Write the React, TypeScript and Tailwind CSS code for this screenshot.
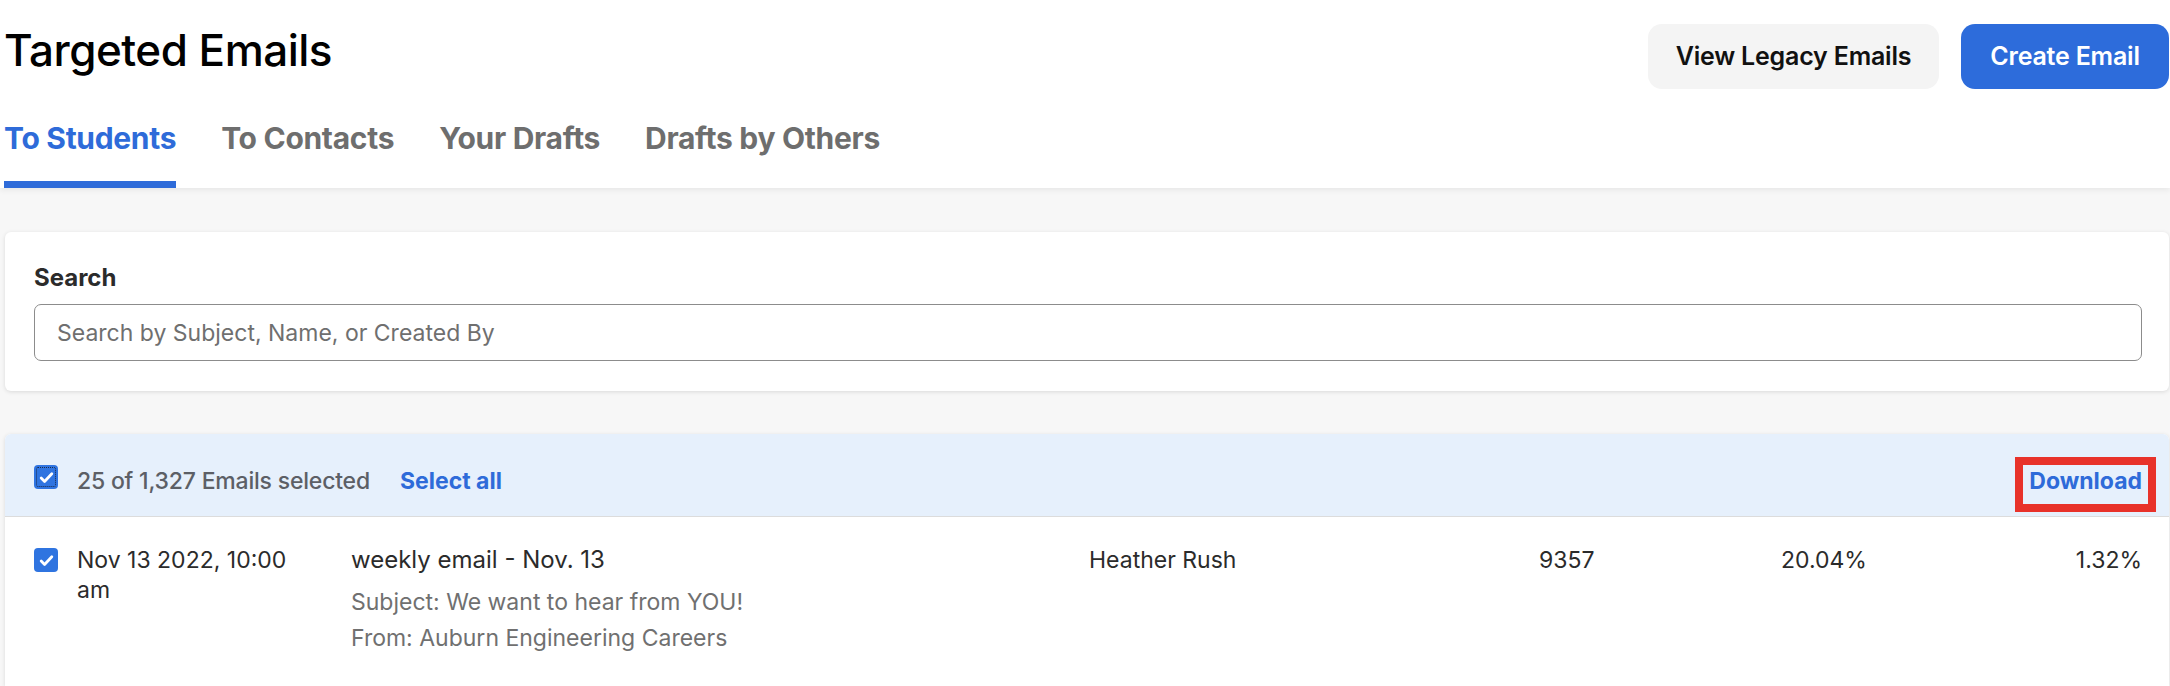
import React from "react";

function Check({ focused = false }: { focused?: boolean }) {
  return (
    <span
      className={
        "flex h-[24px] w-[24px] shrink-0 items-center justify-center rounded-[4px] bg-[#2f74e0] " +
        (focused ? "outline-1 outline-dotted outline-[#1b2a4a] -outline-offset-[3px]" : "")
      }
    >
      <svg width="17" height="17" viewBox="0 0 16 16" fill="none">
        <path d="M3 8.5l3.2 3.2L13 4.5" stroke="white" strokeWidth="2.6" strokeLinecap="round" strokeLinejoin="round" />
      </svg>
    </span>
  );
}

const tabs = ["To Students", "To Contacts", "Your Drafts", "Drafts by Others"];

export default function App() {
  return (
    <div className="min-h-[686px] bg-[#f7f7f7] font-['Inter',sans-serif] text-[#2b2b2b]">
      {/* header */}
      <div className="relative z-10 bg-white pl-[4px] pr-[1px] pt-[24px] shadow-[0_2px_6px_rgba(0,0,0,0.07)]">
        <div className="flex items-start justify-between">
          <h1 className="text-[44px] font-medium leading-[53px] tracking-[-0.5px] text-black">Targeted Emails</h1>
          <div className="flex gap-[22px]">
            <button className="h-[65px] w-[291px] rounded-[14px] bg-[#f4f4f4] text-[25px] font-semibold tracking-[-0.2px] text-[#111]">
              View Legacy Emails
            </button>
            <button className="h-[65px] w-[208px] rounded-[14px] bg-[#2d6cdb] text-[25px] font-semibold tracking-[-0.2px] text-white">
              Create Email
            </button>
          </div>
        </div>
        <div className="mt-[31px] flex gap-[45px]">
          {tabs.map((t, i) => (
            <div
              key={t}
              className={
                "border-b-[7px] pb-[25px] text-[30px] font-bold leading-[36px] tracking-[-0.3px] " +
                (i === 0 ? "border-[#2e6bd9] text-[#2e6bd9]" : "border-transparent text-[#6e6e6e]")
              }
            >
              {t}
            </div>
          ))}
        </div>
      </div>

      <div className="pl-[5px] pr-[1px] pt-[44px]">
        {/* search card */}
        <div className="rounded-[6px] bg-white pb-[30px] pl-[29px] pr-[27px] pt-[32px] shadow-[0_1px_4px_rgba(0,0,0,0.12)]">
          <div className="text-[24px] font-bold leading-[28px] text-[#2b2b2b]">Search</div>
          <input
            className="mt-[12px] h-[57px] w-full rounded-[7px] border border-[#8c8c8c] px-[22px] text-[23px] text-[#2b2b2b] placeholder:text-[#6f6f6f] focus:outline-none"
            placeholder="Search by Subject, Name, or Created By"
          />
        </div>

        {/* results card */}
        <div className="mt-[43px] overflow-hidden rounded-t-[6px] bg-white shadow-[0_1px_4px_rgba(0,0,0,0.12)]">
          <div className="flex h-[83px] items-start border-b border-[#dcdcdc] bg-[#e6f0fc] pl-[29px] pr-[27px] pt-[31px]">
            <Check focused />
            <span className="ml-[19px] mt-[2px] text-[23px] font-medium leading-[28px] tracking-[-0.2px] text-[#5c5f66]">
              25 of 1,327 Emails selected
            </span>
            <span className="ml-[30px] mt-[2px] text-[23px] font-bold leading-[28px] text-[#2e6bd9]">Select all</span>
            <span className="-mr-[14px] -mt-[8px] ml-auto border-[8px] border-[#e8322a] px-[6px] pb-[9px] pt-[2px] text-[23px] font-bold leading-[28px] text-[#2e6bd9]">
              Download
            </span>
          </div>

          <div className="flex items-start pb-[30px] pl-[29px] pr-[27px] pt-[31px] text-[23px] leading-[28px]">
            <div className="w-[43px] shrink-0">
              <Check />
            </div>
            <div className="-mt-[3px] w-[274px] shrink-0">
              <div className="max-w-[215px] leading-[30px]">Nov 13 2022, 10:00 am</div>
            </div>
            <div className="-mt-[2px] w-[738px] shrink-0">
              <div className="text-[24px]">weekly email - Nov. 13</div>
              <div className="mt-[10px] text-[23px] leading-[36px] text-[#707070]">Subject: We want to hear from YOU!</div>
              <div className="text-[23px] leading-[36px] text-[#707070]">From: Auburn Engineering Careers</div>
            </div>
            <div className="-mt-[2px] w-[450px] shrink-0">Heather Rush</div>
            <div className="-mt-[2px] w-[242px] shrink-0">9357</div>
            <div className="-mt-[2px]">20.04%</div>
            <div className="-mt-[2px] ml-auto">1.32%</div>
          </div>
        </div>
      </div>
    </div>
  );
}
